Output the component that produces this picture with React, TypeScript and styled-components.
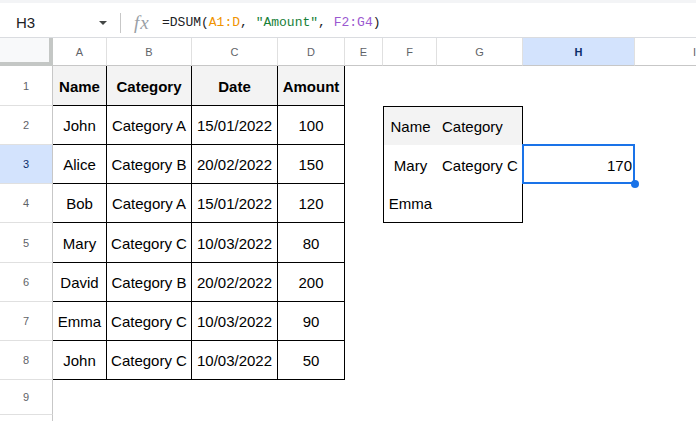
import React from "react";
import styled, { createGlobalStyle } from "styled-components";

const GlobalStyle = createGlobalStyle`
  html, body { margin: 0; padding: 0; background: #fff; }
  body { font-family: "Liberation Sans", Arial, sans-serif; overflow: hidden; }
  * { box-sizing: border-box; }
`;

const Page = styled.div`
  width: 696px;
  height: 421px;
  overflow: hidden;
  display: flex;
  flex-direction: column;
  background: #fff;
`;

const FormulaBar = styled.div`
  height: 38px;
  flex: none;
  display: flex;
  align-items: center;
  padding-top: 5px;
  border-top: 3px solid #f3f4f6;
  border-bottom: 1px solid #dadce0;
  background: #fff;
`;

const NameBox = styled.div`
  width: 120px;
  flex: none;
  display: flex;
  align-items: center;
  justify-content: space-between;
  padding: 0 13px 0 16px;
  font-size: 15px;
  color: #202124;
`;

const Caret = styled.span`
  width: 0;
  height: 0;
  border-left: 4px solid transparent;
  border-right: 4px solid transparent;
  border-top: 4px solid #444746;
`;

const Divider = styled.div`
  width: 1px;
  height: 20px;
  background: #c7c7c7;
  flex: none;
`;

const Fx = styled.span`
  margin-left: 13px;
  width: 28px;
  font-family: "Liberation Serif", "Times New Roman", serif;
  font-style: italic;
  font-size: 19px;
  letter-spacing: 1px;
  color: #9aa0a6;
  flex: none;
`;

const Formula = styled.div`
  font-family: "Liberation Mono", "Courier New", monospace;
  font-size: 13px;
  color: #202124;
  white-space: pre;
`;

const Tok = styled.span<{ $c: string }>`
  color: ${(p) => p.$c};
`;

const Grid = styled.div`
  display: grid;
  grid-template-columns: 53px 54px 85px 86px 67px 38px 54px 86px 112px 120px;
  grid-template-rows: 28px 40px 39px 39px 39px 40px 39px 39px 39px 35px 40px;
`;

const Corner = styled.div`
  background: #f8f9fa;
  border-right: 4px solid #c4c7c5;
  border-bottom: 4px solid #c4c7c5;
`;

const ColHeader = styled.div<{ $active?: boolean }>`
  display: flex;
  align-items: center;
  justify-content: center;
  font-family: "Liberation Sans", Arial, sans-serif;
  font-size: 11px;
  color: ${(p) => (p.$active ? "#0b2e6b" : "#5f6368")};
  font-weight: ${(p) => (p.$active ? 700 : 400)};
  background: ${(p) => (p.$active ? "#d3e3fd" : "#fff")};
  border-right: 1px solid #e0e0e0;
  border-bottom: 1px solid #c7c7c7;
`;

const RowHeader = styled.div<{ $active?: boolean }>`
  display: flex;
  align-items: center;
  justify-content: center;
  font-size: 11px;
  color: ${(p) => (p.$active ? "#0b2e6b" : "#5f6368")};
  background: ${(p) => (p.$active ? "#d3e3fd" : "#fff")};
  border-right: 1px solid #c7c7c7;
  border-bottom: 1px solid #e0e0e0;
`;

type Align = "left" | "center" | "right";

const Cell = styled.div<{
  $align: Align;
  $bold?: boolean;
  $bg?: string;
  $bt?: boolean;
  $br?: boolean;
  $bb?: boolean;
  $bl?: boolean;
}>`
  position: relative;
  display: flex;
  align-items: center;
  justify-content: ${(p) =>
    p.$align === "center" ? "center" : p.$align === "right" ? "flex-end" : "flex-start"};
  padding: 1px ${(p) => (p.$align === "right" ? "3px" : "5px")} 0 5px;
  font-size: 15px;
  font-weight: ${(p) => (p.$bold ? 700 : 400)};
  color: #000;
  white-space: nowrap;
  background: ${(p) => p.$bg || "transparent"};
  border-top: ${(p) => (p.$bt ? "1px solid #000" : "none")};
  border-right: ${(p) => (p.$br ? "1px solid #000" : "none")};
  border-bottom: ${(p) => (p.$bb ? "1px solid #000" : "none")};
  border-left: ${(p) => (p.$bl ? "1px solid #000" : "none")};
`;

const Selection = styled.div`
  position: absolute;
  top: -1px;
  left: -1px;
  right: 0;
  bottom: 0;
  border: 2px solid #1a73e8;
  pointer-events: none;
  z-index: 2;
`;

const Handle = styled.div`
  position: absolute;
  right: -4px;
  bottom: -4px;
  width: 8px;
  height: 8px;
  border-radius: 50%;
  background: #1a73e8;
  z-index: 3;
`;

const COLS = ["A", "B", "C", "D", "E", "F", "G", "H", "I"];
const ROWS = [1, 2, 3, 4, 5, 6, 7, 8, 9, 10];

const TABLE = [
  ["Name", "Category", "Date", "Amount"],
  ["John", "Category A", "15/01/2022", "100"],
  ["Alice", "Category B", "20/02/2022", "150"],
  ["Bob", "Category A", "15/01/2022", "120"],
  ["Mary", "Category C", "10/03/2022", "80"],
  ["David", "Category B", "20/02/2022", "200"],
  ["Emma", "Category C", "10/03/2022", "90"],
  ["John", "Category C", "10/03/2022", "50"],
];

const CRITERIA: Record<string, string> = {
  F2: "Name",
  G2: "Category",
  F3: "Mary",
  G3: "Category C",
  F4: "Emma",
  G4: "",
};

function renderCell(c: number, r: number) {
  const key = `${COLS[c]}${r}`;
  if (c <= 3 && r <= 8) {
    return (
      <Cell key={key} $align="center" $bold={r === 1} $bg={r === 1 ? "#f3f3f3" : undefined} $br $bb>
        {TABLE[r - 1][c]}
      </Cell>
    );
  }
  if ((c === 5 || c === 6) && r >= 2 && r <= 4) {
    return (
      <Cell
        key={key}
        $align={c === 5 ? "center" : "left"}
        $bg={r === 2 ? "#f3f3f3" : undefined}
        $bt={r === 2}
        $bb={r === 4}
        $bl={c === 5}
        $br={c === 6}
      >
        {CRITERIA[key]}
      </Cell>
    );
  }
  if (key === "H3") {
    return (
      <Cell key={key} $align="right">
        170
        <Selection />
        <Handle />
      </Cell>
    );
  }
  return <Cell key={key} $align="left" />;
}

export default function App() {
  return (
    <>
      <GlobalStyle />
      <Page>
        <FormulaBar>
          <NameBox>
            <span>H3</span>
            <Caret />
          </NameBox>
          <Divider />
          <Fx>fx</Fx>
          <Formula>
            =DSUM(<Tok $c="#f09300">A1:D</Tok>, <Tok $c="#188038">"Amount"</Tok>,{" "}
            <Tok $c="#9b59d0">F2:G4</Tok>)
          </Formula>
        </FormulaBar>
        <Grid>
          <Corner />
          {COLS.map((col) => (
            <ColHeader key={col} $active={col === "H"}>
              {col}
            </ColHeader>
          ))}
          {ROWS.map((r) => (
            <React.Fragment key={r}>
              <RowHeader $active={r === 3}>{r < 10 ? r : ""}</RowHeader>
              {COLS.map((_, c) => renderCell(c, r))}
            </React.Fragment>
          ))}
        </Grid>
      </Page>
    </>
  );
}
